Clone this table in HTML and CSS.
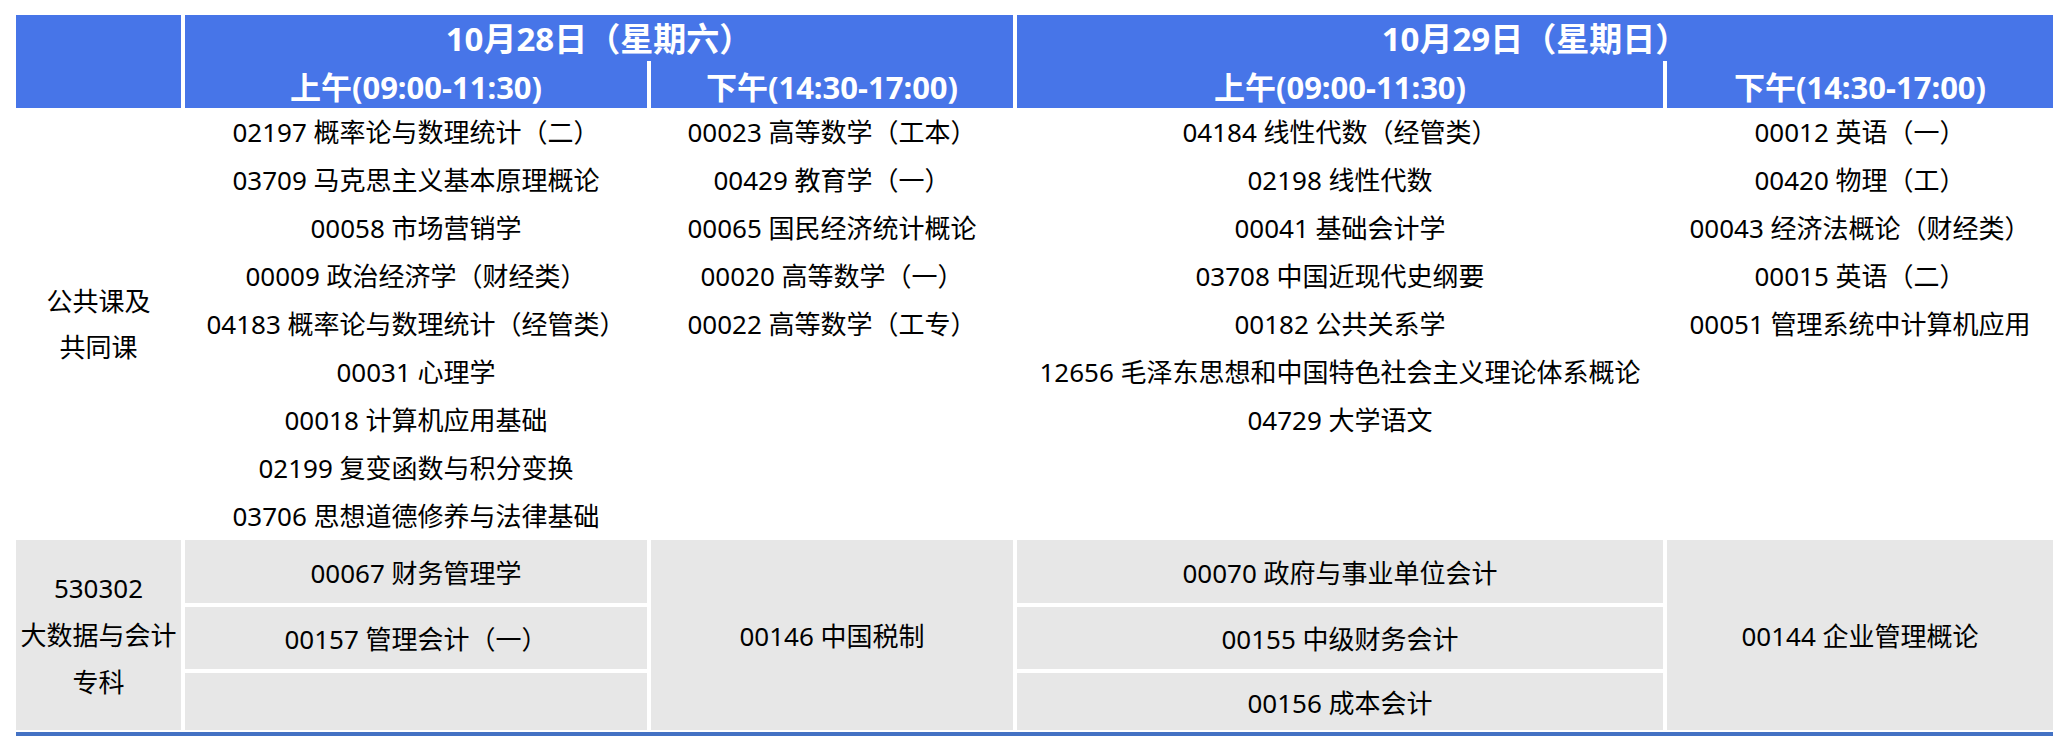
FILE: index.html
```html
<!DOCTYPE html>
<html lang="zh-CN">
<head>
<meta charset="utf-8">
<title>考试安排</title>
<link rel="stylesheet" href="styles.css">
</head>
<body>
<div class="schedule">
  <div class="grid head">
    <div class="hcell corner"></div>
    <div class="hcell day d1">10月28日（星期六）</div>
    <div class="hcell day d2">10月29日（星期日）</div>
    <div class="hcell sub c2">上午(09:00-11:30)</div>
    <div class="hcell sub c3">下午(14:30-17:00)</div>
    <div class="hcell sub c4">上午(09:00-11:30)</div>
    <div class="hcell sub c5">下午(14:30-17:00)</div>
  </div>

  <div class="grid body">
    <div class="cat">公共课及<br>共同课</div>
    <ul class="list">
      <li>02197 概率论与数理统计（二）</li>
      <li>03709 马克思主义基本原理概论</li>
      <li>00058 市场营销学</li>
      <li>00009 政治经济学（财经类）</li>
      <li>04183 概率论与数理统计（经管类）</li>
      <li>00031 心理学</li>
      <li>00018 计算机应用基础</li>
      <li>02199 复变函数与积分变换</li>
      <li>03706 思想道德修养与法律基础</li>
    </ul>
    <ul class="list">
      <li>00023 高等数学（工本）</li>
      <li>00429 教育学（一）</li>
      <li>00065 国民经济统计概论</li>
      <li>00020 高等数学（一）</li>
      <li>00022 高等数学（工专）</li>
    </ul>
    <ul class="list">
      <li>04184 线性代数（经管类）</li>
      <li>02198 线性代数</li>
      <li>00041 基础会计学</li>
      <li>03708 中国近现代史纲要</li>
      <li>00182 公共关系学</li>
      <li>12656 毛泽东思想和中国特色社会主义理论体系概论</li>
      <li>04729 大学语文</li>
    </ul>
    <ul class="list">
      <li>00012 英语（一）</li>
      <li>00420 物理（工）</li>
      <li>00043 经济法概论（财经类）</li>
      <li>00015 英语（二）</li>
      <li>00051 管理系统中计算机应用</li>
    </ul>
  </div>

  <div class="grid major">
    <div class="gcell span3 c1 multi">530302<br>大数据与会计<br>专科</div>
    <div class="gcell c2 r1">00067 财务管理学</div>
    <div class="gcell c2 r2">00157 管理会计（一）</div>
    <div class="gcell c2 r3"></div>
    <div class="gcell span3 c3">00146 中国税制</div>
    <div class="gcell c4 r1">00070 政府与事业单位会计</div>
    <div class="gcell c4 r2">00155 中级财务会计</div>
    <div class="gcell c4 r3">00156 成本会计</div>
    <div class="gcell span3 c5">00144 企业管理概论</div>
  </div>
  <div class="rule"></div>
</div>
</body>
</html>
```

FILE: styles.css
```css
html, body {
  margin: 0;
  padding: 0;
  background: #ffffff;
}

body {
  font-family: "Noto Sans", "Noto Sans CJK SC", sans-serif;
  color: #000000;
}

.schedule {
  padding: 15px 0 0 16px;
  width: 2037px;
}

.grid {
  display: grid;
  grid-template-columns: 165px 462px 362px 646px 386px;
  column-gap: 4px;
}

/* header */
.head {
  grid-template-rows: 46px 47px;
}

.hcell {
  background: #4775e8;
  color: #ffffff;
  font-weight: 700;
  display: flex;
  align-items: center;
  justify-content: center;
  white-space: nowrap;
}

.corner {
  grid-column: 1;
  grid-row: 1 / 3;
}

.day {
  font-size: 33px;
  grid-row: 1;
  padding-bottom: 3px;
}

.d1 { grid-column: 2 / 4; }
.d2 { grid-column: 4 / 6; }

.sub {
  font-size: 31px;
  grid-row: 2;
  padding-top: 2px;
}

.c1 { grid-column: 1; }
.c2 { grid-column: 2; }
.c3 { grid-column: 3; }
.c4 { grid-column: 4; }
.c5 { grid-column: 5; }

/* public courses */
.body {
  height: 432px;
  font-size: 26px;
}

.cat {
  display: flex;
  align-items: center;
  justify-content: center;
  text-align: center;
  line-height: 46px;
}

.list {
  list-style: none;
  margin: 0;
  padding: 0;
  text-align: center;
}

.list li {
  height: 48px;
  line-height: 48px;
  white-space: nowrap;
}

/* major specific courses */
.major {
  grid-template-rows: 63px 62px 57px;
  row-gap: 4px;
  font-size: 26px;
}

.gcell {
  background: #e7e7e7;
  display: flex;
  align-items: center;
  justify-content: center;
  text-align: center;
  white-space: nowrap;
}

.span3 { grid-row: 1 / 4; }
.r1 { grid-row: 1; }
.r2 { grid-row: 2; }
.r3 { grid-row: 3; }

.multi {
  line-height: 47px;
}

.rule {
  margin-top: 2px;
  height: 4px;
  background: #4472c4;
}
```
